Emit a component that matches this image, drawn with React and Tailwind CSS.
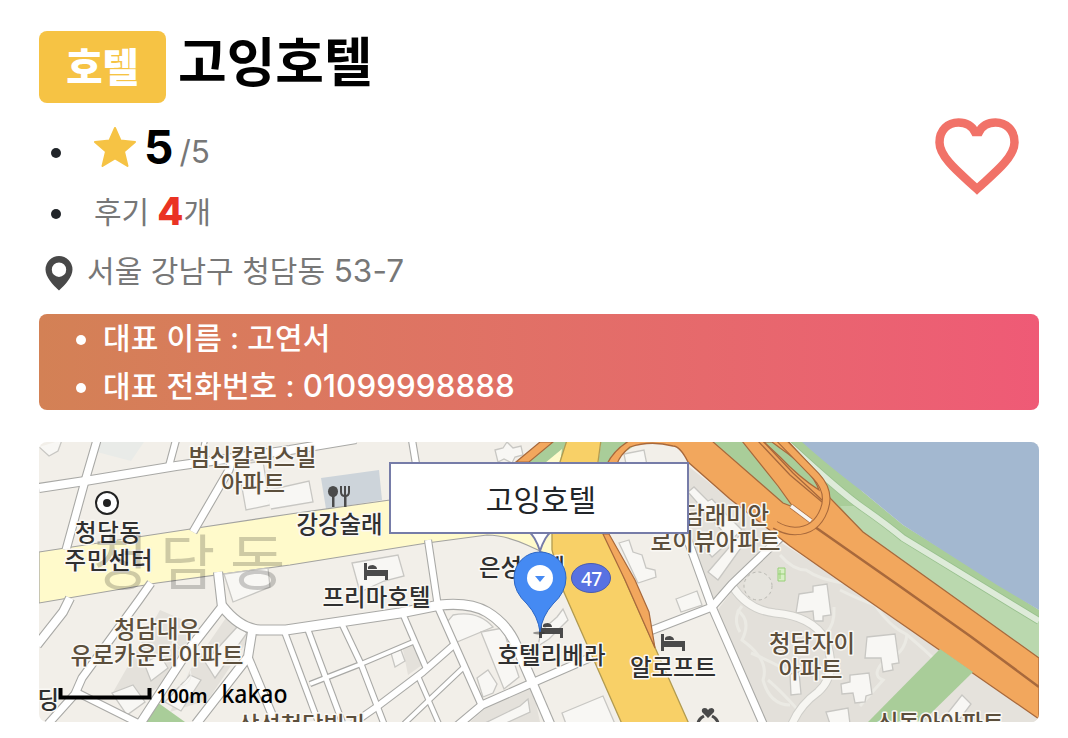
import React from "react";

const FONT = "font-['Inter','Noto_Sans_CJK_KR',sans-serif]";

const ROADS = [
  ["M39 488L85 481L176 466L290 450L356 439", 8],
  ["M97 440L85 481L66 550", 7],
  ["M176 440L169 466", 6],
  ["M205 440L200 462", 4],
  ["M232 459L229 470L193 532", 7],
  ["M412 440L416 464", 6],
  ["M70 598L63 612L37 645", 8],
  ["M151 583L139 600L82 678L75 694L48 724", 7],
  ["M76 692L140 724", 6],
  ["M218 572L222 607L187 652L140 724", 8],
  ["M222 606Q240 629 260 630L286 630L400 613L440 605Q470 602 487 612Q507 624 516 645L533 684", 9],
  ["M252 632L248 657L196 724", 8],
  ["M248 657L276 724", 7],
  ["M428 540L438 607L482 706", 6],
  ["M285 633L319 724", 5],
  ["M308 630L343 724", 5],
  ["M342 624L361 664L384 724", 5],
  ["M402 612L427 670", 5],
  ["M310 684L361 664L413 642", 4],
  ["M455 644L423 672L378 706L352 724", 6],
  ["M418 676L439 724", 4],
  ["M464 667L427 702L404 724", 4],
  ["M457 726L482 705L532 683L594 656", 7],
  ["M533 684L551 726", 8],
  ["M686 535L712 607L764 726", 7],
  ["M780 538L732 584L712 607L650 631", 7],
];

const BUILDINGS = [
  "M39 447L49 456L58 451L62 440",
  "M235 465L263 461L270 505L246 510L241 482",
  "M265 491L309 481L313 502L271 509",
  "M352 563L398 555L404 576L384 581L360 592Z",
  "M224 574L268 568L270 587L233 602Z",
  "M453 615Q478 610 493 627L457 642L447 622Z",
  "M481 632L503 628L507 641L519 677L504 689Z",
  "M477 678L488 670L497 684L493 693L483 697Z",
  "M391 653L401 650L405 661L395 667Z",
  "M495 450L503 448L507 442L513 448L521 446L523 455L515 457L512 463L504 459L498 462Z",
  "M624 454L644 450L648 470L628 474Z",
  "M688 492L694 487L708 501L712 499L724 512L742 530L712 557L706 550L724 533Z",
  "M708 572L744 530L751 534L718 580Z",
  "M619 543L629 540L633 552L642 555L646 568L655 570L656 577L638 583Z",
  "M676 599L697 591L702 605L681 612Z",
  "M557 617L563 609L568 620L549 639L538 646L541 631Z",
  "M562 713L603 696L615 724L566 724Z",
  "M112 693L133 685L145 702L127 715Z",
  "M144 663L160 655L168 668L151 681Z",
  "M165 702L190 675L201 680L181 711Z",
  "M205 662L238 626L247 633L215 678Z",
  "M799 594L813 592L813 586L827 584L831 615L823 616L823 621L814 621L813 611L796 613Z",
  "M867 637L895 634L899 663L892 664L893 670L883 672L881 658L865 658Z",
  "M841 684L850 682L850 675L869 673L872 694L866 696L865 702L855 703L853 693L842 694Z",
  "M826 712L848 708L850 724L830 724Z",
  "M790 674L799 672L801 694L791 695Z",
  "M943 719L962 695L971 704L956 724Z",
  "M483 724L520 706L528 699L530 712L504 724Z",
];

const PATHS = [
  "M737 610Q752 620 742 640Q770 660 763 680Q770 705 790 705",
  "M742 606Q732 618 740 632",
  "M840 590Q860 600 875 605Q890 627 906 634Q925 650 935 660",
  "M907 634Q905 655 885 660Q870 675 883 680L860 706",
  "M780 555Q793 570 806 570Q820 580 845 583",
  "M751 653Q777 664 792 674",
  "M834 607Q835 625 826 633",
  "M768 680Q780 690 798 710",
];

const LABELS = [
  ["범신칼릭스빌", 188.5, 466, 128, "#5c4f3c"],
  ["아파트", 221, 491.5, 64, "#5c4f3c"],
  ["청담동", 75, 540.5, 66, "#303030"],
  ["주민센터", 64.5, 568.5, 88, "#303030"],
  ["강강술래", 296.5, 533, 86, "#303030"],
  ["프리마호텔", 322.5, 606, 108, "#303030"],
  ["은성호텔", 479, 576, 86, "#303030"],
  ["호텔리베라", 497.5, 664, 108, "#303030"],
  ["알로프트", 630, 676, 86, "#303030"],
  ["청담래미안", 662, 524, 107, "#5c4f3c"],
  ["로이뷰아파트", 650.5, 550, 130, "#5c4f3c"],
  ["청담자이", 769, 652, 86, "#5c4f3c"],
  ["아파트", 778.5, 678, 64, "#5c4f3c"],
  ["신동아아파트", 877, 732, 127, "#5c4f3c"],
  ["삼성청담빌라", 238, 734, 128, "#5c4f3c"],
  ["청담대우", 114, 638, 86, "#5c4f3c"],
  ["유로카운티아파트", 70.5, 664, 173, "#5c4f3c"],
  ["딩", 37.5, 708, 21, "#303030"],
];

function Bed({ x, y }) {
  return (
    <g transform={`translate(${x} ${y})`} fill="#4a4a4a">
      <path d="M0 0H3V7H24V17H21V13H3V17H0Z" />
      <path d="M4 6V4Q5 2 9 2Q13 3 13 6Z" />
    </g>
  );
}

function MapDrawing() {
  return (
    <svg viewBox="39 442 1000 280" className="block h-[280px] w-[1000px]">
      <rect x="39" y="442" width="1000" height="280" fill="#f2efe9" />
      <path d="M100 442H144L131 461L97 452Z" fill="#e9ebe8" />
      <path d="M321 478L379 470L382 500L326 509Z" fill="#cdd4da" />
      <path d="M160 610L195 625L170 680L130 705L112 694Z M230 612L248 625L248 640L208 700L170 712L190 670Z M402 645L413 644L422 665L408 675Z M490 704L532 685L540 722H470Z" fill="#e4e1db" />
      <path d="M157 702L185 722H140Z" fill="#a9cd99" />
      <path d="M688 466L740 507L783 542L712 606L690 548Z M780 542L850 586L1039 717V722H766L716 612L735 587Z" fill="#e3e0da" />
      <path d="M973 672L1039 717V722H922Z" fill="#e5e2dc" />
      <path d="M39 552L197 528L290 514L390 500L560 470V560L527 545Q505 535 487 535L427 543L290 565L157 583L39 603Z" fill="#fffacb" stroke="#a3a3a0" strokeWidth="1.2" />
      <g fill="none" stroke="#ebeae4" strokeWidth="3">
        {PATHS.map((d) => <path key={d} d={d} />)}
      </g>
      <g fill="#f8f7f4" stroke="#c8c7c3" strokeWidth="1.3">
        {BUILDINGS.map((d) => <path key={d} d={d} />)}
      </g>
      <circle cx="758" cy="586" r="14" fill="#e6e4de" stroke="#b9b8b2" strokeDasharray="3 3" />
      <g fill="none" stroke="#f0efeb" strokeWidth="1">
        <circle cx="184" cy="640" r="8" /><circle cx="184" cy="640" r="12" />
        <circle cx="180" cy="675" r="7" /><circle cx="180" cy="675" r="11" />
      </g>
      <path d="M733 587Q748 610 775 613Q812 616 826 640Q838 675 818 692Q800 705 792 724" fill="none" stroke="#cfcec9" strokeWidth="9" />
      <path d="M733 587Q748 610 775 613Q812 616 826 640Q838 675 818 692Q800 705 792 724" fill="none" stroke="#f7f6f2" strokeWidth="7" />
      <g fill="none" stroke="#a9a9a6" strokeLinejoin="round">
        {ROADS.map(([d, w]) => <path key={d} d={d} strokeWidth={w + 2.2} />)}
      </g>
      <g fill="none" stroke="#fff" strokeLinejoin="round">
        {ROADS.map(([d, w]) => <path key={d} d={d} strokeWidth={w} />)}
      </g>
      <path d="M540 442H567L560 462H528Z" fill="#a9cd99" />
      <path d="M540 442H553L529 462H516Z" fill="#f2a75d" stroke="#a8693c" strokeWidth="1.2" />
      <path d="M562 449L560 463H545Z" fill="#fffacb" />
      <path d="M601 442H640L607 464H598Z" fill="#a9cd99" />
      <path d="M567 440H601L598 462L600 500L607 534L625 580L653 643L689 724H622L563 590L552 550V534L560 462Z" fill="#f8d067" stroke="#b29b50" strokeWidth="1.3" />
      <path d="M603 534H609L635 580L649 612L655 648L625 580Z" fill="#f2a75d" stroke="#a8693c" strokeWidth="1.2" />
      <path d="M780 440H810L863 492L903 525L997 583L1039 610V663L928 583L863 535Z" fill="#a9cd99" />
      <path d="M802 442H1039V610L997 585L903 525L863 492Q825 463 802 442Z" fill="#a3b8d0" />
      <path d="M840 506H857L903 540L979 587L1039 622V662L928 582L863 534Z" fill="#bad8ae" />
      <path d="M786 442Q840 492 863 508T903 538L980 585L1039 621" fill="none" stroke="#98c08e" strokeWidth="7.6" />
      <path d="M786 442Q840 492 863 508T903 538L980 585L1039 621" fill="none" stroke="#deebd9" strokeWidth="6" />
      <path d="M607 464Q615 448 634 438H785L822 478L830 498L863 532L937 585L1039 658V719L840 581L790 546L730 499L688 462Q680 446 673 446Q650 440 630 447Q620 455 617 464Z" fill="#f2a75d" stroke="#a8693c" strokeWidth="1.3" />
      <path d="M712 441H742L778 486L793 507L783 503Z M780 448Q812 470 819 490Q800 478 780 457L764 442H772Z" fill="#a9cd99" stroke="#a8693c" strokeWidth="1.2" />
      <g fill="none" stroke="#a8693c" strokeWidth="1.3">
        <path d="M757 440L790 475L822 502M762 440L793 473L822 500" />
        <path d="M815 527L898 585L970 636L1039 687" strokeWidth="2.6" />
      </g>
      <path d="M791 506L811 521" stroke="#a8693c" strokeWidth="5" />
      <path d="M791 506L811 521" stroke="#f7f5f2" strokeWidth="3.5" />
      <path d="M779 438L816 476Q831 492 824 510Q816 531 795 531Q785 531 775 525" fill="none" stroke="#a8693c" strokeWidth="8.6" />
      <path d="M779 438L816 476Q831 492 824 510Q816 531 795 531Q785 531 774 524" fill="none" stroke="#f2a75d" strokeWidth="6.4" />
      <path d="M940 649L973 672L922 722H868Z" fill="#a9cd99" />
      <path d="M778 568H785V581H778ZM778 574H785M780 570V579" fill="#d7efc4" stroke="#97cf76" />

      <g className="font-['Noto_Sans_CJK_KR',sans-serif]" fontSize="23.4" fontWeight="500" stroke="#faf8f4" strokeWidth="3" strokeLinejoin="round" paintOrder="stroke">
        {LABELS.map(([t, x, y, w, c]) => (
          <text key={t + y} x={x} y={y} textLength={w} fill={c}>{t}</text>
        ))}
      </g>

      <text y="585" fontSize="60" fontWeight="400" fill="#000" opacity="0.19" x="93 160 230" className="font-['Noto_Sans_CJK_KR',sans-serif]">청담동</text>

      <circle cx="107" cy="503" r="11" fill="#fff" stroke="#222" strokeWidth="2" />
      <circle cx="107" cy="503" r="4" fill="#222" />
      <g fill="#4a4a4a">
        <ellipse cx="333" cy="491.500" rx="5" ry="5.500" />
        <path d="M332 496H334.500V507H332ZM344 495H346.500V507H344Z" />
        <path d="M341 486V492Q341 496 345 496Q349 496 349 492V486M345 486V496" fill="none" stroke="#4a4a4a" strokeWidth="2" />
      </g>
      <Bed x={364} y={563} />
      <Bed x={539} y={621} />
      <Bed x={661} y={634} />
      <g fill="#4a4a4a">
        <path d="M708 718L702 712Q701 708 705 708Q707 708 708 710Q709 708 712 708Q715 709 714 712Z" />
        <path d="M704 716Q698 719 698 724M712 716Q718 719 718 724" fill="none" stroke="#4a4a4a" strokeWidth="3" />
      </g>
      <ellipse cx="591" cy="578" rx="19.500" ry="14.500" fill="#5872e2" stroke="#4a5cae" />
      <text x="581" y="585.500" fontSize="19" fontWeight="500" fill="#fff" textLength="21" className="font-['Noto_Sans',sans-serif]">47</text>
      <path d="M60.500 688V697.500H149.500V688" fill="none" stroke="#000" strokeWidth="4" />
      <text x="156.500" y="702.500" fontSize="19" fontWeight="600" textLength="51" lengthAdjust="spacingAndGlyphs" className="font-['Noto_Sans',sans-serif]">100m</text>
      <text x="221.500" y="703" fontSize="24.500" fontWeight="500" textLength="66" lengthAdjust="spacingAndGlyphs" className="font-['Noto_Sans',sans-serif]">kakao</text>

      <path d="M529 532Q535 536 540 551Q545 536 551 532Z" fill="#fff" stroke="#767ca8" strokeWidth="2" />
      <ellipse cx="539" cy="633" rx="6" ry="1.500" fill="#333" opacity="0.5" />
      <path d="M540 632Q538 616 527 604Q514 592 514 578A26 26 0 0 1 566 578Q566 592 553 604Q542 616 540 632Z" fill="#458af3" stroke="#2c66c4" />
      <circle cx="540" cy="578" r="13" fill="#fff" />
      <path d="M535 576H545L540 582Z" fill="#458af3" />
    </svg>
  );
}

function Dot({ className }) {
  return <span className={`block size-2.5 shrink-0 rounded-full ${className}`} />;
}

export default function App() {
  return (
    <main className={`h-[738px] w-[1068px] overflow-hidden bg-white pl-[39px] pt-[31px] text-[30px] ${FONT}`}>
      <header className="flex h-[72px] items-center gap-3">
        <span className="flex h-[72px] w-[127px] items-center justify-center rounded-lg bg-[#f6c344] pt-[3px] text-[39.500px] font-extrabold leading-none text-white">호텔</span>
        <h1 className="mt-[-8px] text-[52.900px] font-bold leading-none text-black">고잉호텔</h1>
      </header>

      <section className="flex w-[1000px] justify-between">
        <div className="text-[#777777]">
          <ul>
            <li className="flex h-[78px] items-center pl-3 pt-[22px]">
              <Dot className="bg-[#212529]" />
              <svg viewBox="0 0 42 40" className="ml-[33px] mt-[-12px] h-10 w-[42px]" fill="#f6c344" stroke="#f6c344" strokeWidth="2" strokeLinejoin="round">
                <path d="M21 1L26.500 13.500L41 15L30 24.500L33.500 39L21 31.500L8.500 39L12 24.500L1 15L15.500 13.500Z" />
              </svg>
              <b className="ml-[8px] mt-[-12px] text-[46px] font-bold leading-none text-black">5</b>
              <span className="ml-[6px] mt-[-2px] text-[31.500px] leading-none">/5</span>
            </li>
            <li className="flex h-[62px] items-center pl-3 pt-1">
              <Dot className="bg-[#212529]" />
              <span className="ml-[33px] mt-[-4px] leading-none">후기</span>
              <b className="ml-[8px] mt-[-7px] text-[38px] font-extrabold leading-none text-[#ea3323]">4</b>
              <span className="mt-[-4px] leading-none">개</span>
            </li>
          </ul>
          <p className="flex h-[60px] items-center pl-1.5">
            <svg viewBox="0 0 28 35" className="h-[35px] w-7">
              <path fillRule="evenodd" fill="#484848" d="M14 0A13.500 13.500 0 0 1 27.500 13.500C27.500 21 20 29 14 34.500C8 29 .5 21 .5 13.500A13.500 13.500 0 0 1 14 0ZM14 6.500A7.200 7.200 0 1 0 14 20.900A7.200 7.200 0 1 0 14 6.500Z" />
            </svg>
            <span className="ml-3.5 mt-[-5px] leading-none tracking-[0.05px]">서울 강남구 청담동 <span className="text-[31.500px]">53-7</span></span>
          </p>
        </div>
        <svg viewBox="0 0 84 77" className="mr-5 mt-[15px] h-[77px] w-[84px]">
          <path d="M42 71C27 57 4.500 40 4.500 24.500C4.500 12 13 4.500 23.500 4.500C31 4.500 37 8 40 14H44C47 8 53 4.500 60.500 4.500C71 4.500 79.500 12 79.500 24.500C79.500 40 57 57 42 71Z" fill="none" stroke="#f17268" strokeWidth="8.500" />
        </svg>
      </section>

      <ul className="mt-[11px] h-24 w-[1000px] rounded-lg bg-linear-to-r from-[#d38155] to-[#ef5a76] pl-[37px] font-medium text-white">
        <li className="flex h-12 items-center gap-[17px]"><Dot className="mt-1 bg-white" /><span className="leading-none tracking-[0.1px]">대표 이름 : 고연서</span></li>
        <li className="flex h-12 items-center gap-[17px]"><Dot className="mt-1 bg-white" /><span className="pt-0.5 leading-none tracking-[0.1px]">대표 전화번호 : <span className="text-[31.300px]">01099998888</span></span></li>
      </ul>

      <section className="relative mt-8 h-[280px] w-[1000px] overflow-hidden rounded-lg">
        <MapDrawing />
        <div className="absolute left-[350px] top-5 flex h-[72px] w-[300px] items-center justify-center border-2 border-[#767ca8] bg-white pl-1 pt-1 text-[#212529]">고잉호텔</div>
      </section>
    </main>
  );
}
